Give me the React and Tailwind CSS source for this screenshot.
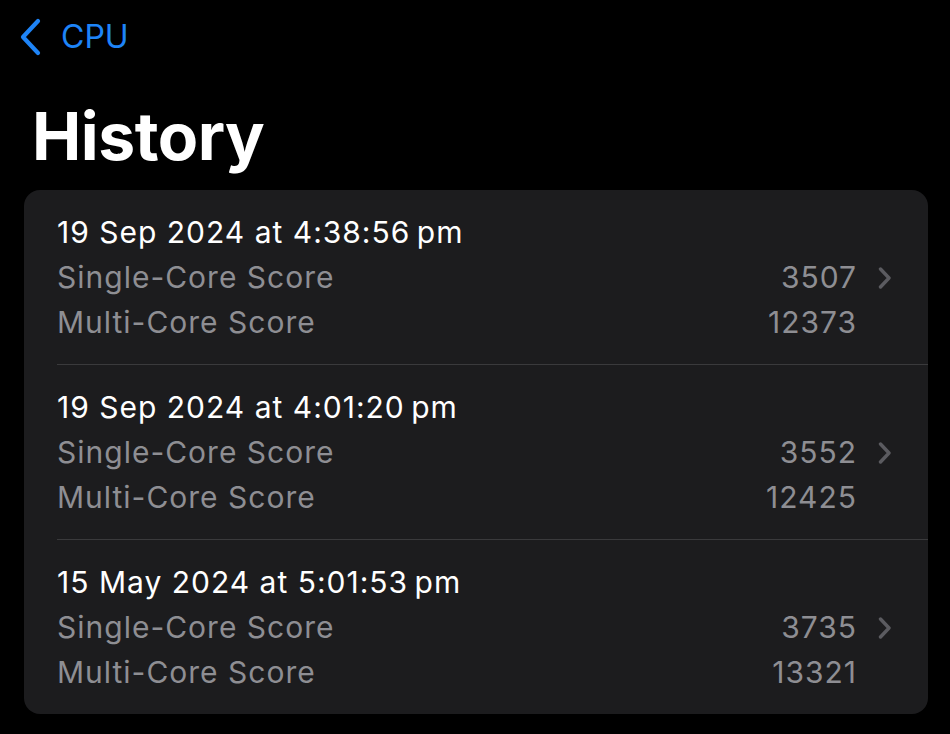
const runs = [
  { date: '19 Sep 2024 at 4:38:56\u202Fpm', single: 3507, multi: 12373 },
  { date: '19 Sep 2024 at 4:01:20\u202Fpm', single: 3552, multi: 12425 },
  { date: '15 May 2024 at 5:01:53\u202Fpm', single: 3735, multi: 13321 },
]

function BackChevron() {
  return (
    <svg width="24" height="38" viewBox="0 0 24 38" fill="none">
      <path d="M20 3 L5 19 L20 35" stroke="#1e84f7" strokeWidth="4.2" strokeLinecap="round" strokeLinejoin="round" />
    </svg>
  )
}

function Disclosure() {
  return (
    <svg width="14" height="22" viewBox="0 0 14 22" fill="none">
      <path d="M2.5 2 L11 11 L2.5 20" stroke="#5b5b60" strokeWidth="3.4" strokeLinecap="round" strokeLinejoin="round" />
    </svg>
  )
}

export default function App() {
  return (
    <div className="w-[950px] h-[734px] bg-black overflow-hidden font-['Inter',sans-serif]">
      <div className="flex items-center h-[74px] pl-[18px]">
        <BackChevron />
        <span className="ml-[19px] text-[32px] text-[#1e84f7] leading-none">CPU</span>
      </div>
      <h1 className="pl-[32px] pt-[22px] text-[66px] font-bold text-white leading-[80px] tracking-[-0.5px]">History</h1>
      <div className="mt-[14px] ml-[24px] mr-[22px] bg-[#1c1c1e] rounded-[16px] overflow-hidden">
        {runs.map((run, i) => (
          <div key={i} className="pl-[33px]">
            <div className={`pt-[20px] pb-[19px] text-[30px] leading-[45px] tracking-[1px] ${i > 0 ? 'border-t border-[#3a3a3c]' : ''}`}>
              <div className="text-white">{run.date}</div>
              <div className="flex items-center text-[#8e8e93]">
                <span className="flex-1">Single-Core Score</span>
                <span>{run.single}</span>
                <span className="w-[71px] pl-[21px] flex items-center">
                  <Disclosure />
                </span>
              </div>
              <div className="flex items-center text-[#8e8e93]">
                <span className="flex-1">Multi-Core Score</span>
                <span>{run.multi}</span>
                <span className="w-[71px]" />
              </div>
            </div>
          </div>
        ))}
      </div>
    </div>
  )
}
